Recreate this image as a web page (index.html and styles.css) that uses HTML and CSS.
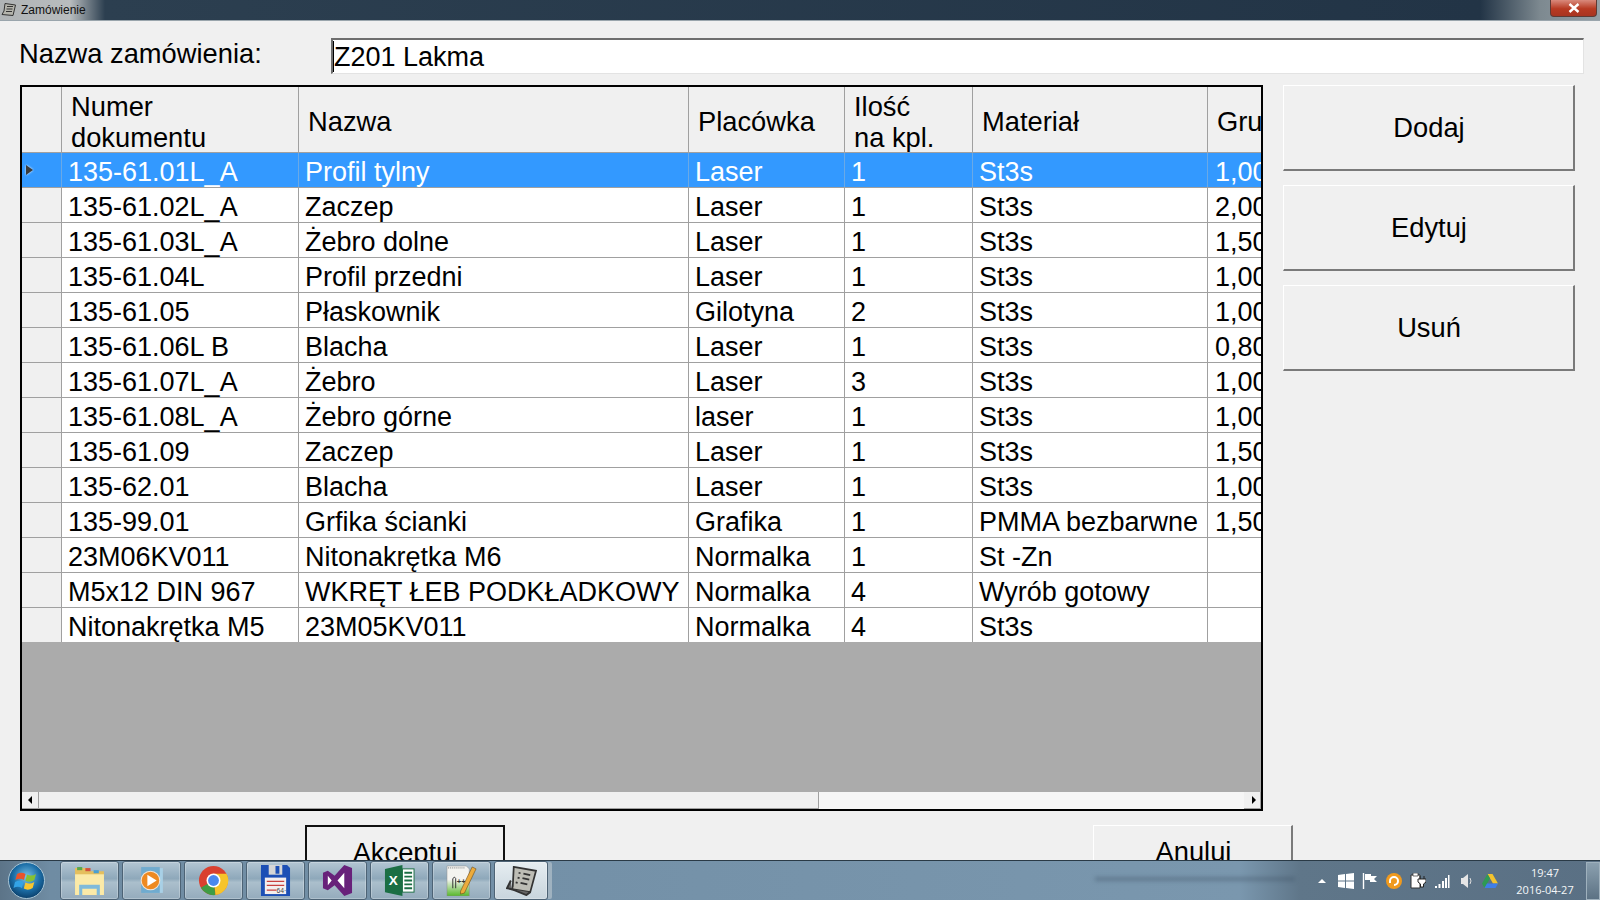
FILE: index.html
```html
<!DOCTYPE html>
<html lang="pl">
<head>
<meta charset="utf-8">
<title>Zamówienie</title>
<link rel="stylesheet" href="styles.css">
</head>
<body>
<div class="screen">
  <header class="titlebar">
    <svg class="title-icon" viewBox="0 0 16 16"><path d="M4 1.500 14.500 3 12 13.500 1 12.500 3 9z" fill="#b4b4ac" stroke="#333"/><path d="M6 4.500h6M5.500 7h6M5 9.500h6" stroke="#333"/></svg>
    <span class="title-text">Zamówienie</span>
    <span class="close"><svg viewBox="0 0 12 10" class="close-x"><path d="M1.500 1 10.500 9M10.500 1 1.500 9" stroke="#fff" stroke-width="2.400"/></svg></span>
  </header>
  <main class="window">
    <div class="name-row">
      <label class="name-label">Nazwa zamówienia:</label>
      <div class="name-input"><span class="caret"></span>Z201 Lakma</div>
    </div>
    <div class="middle">
      <div class="grid">
        <div class="grid-head">
          <div class="rh"></div>
          <div class="c c1 hc">Numer<br>dokumentu</div>
          <div class="c c2 hc">Nazwa</div>
          <div class="c c3 hc">Placówka</div>
          <div class="c c4 hc">Ilość<br>na kpl.</div>
          <div class="c c5 hc">Materiał</div>
          <div class="c c6 hc">Grubość</div>
        </div>
        <div class="row sel"><div class="rh"><span class="tri"></span></div><div class="c c1">135-61.01L_A</div><div class="c c2">Profil tylny</div><div class="c c3">Laser</div><div class="c c4">1</div><div class="c c5">St3s</div><div class="c c6">1,00</div></div>
        <div class="row"><div class="rh"></div><div class="c c1">135-61.02L_A</div><div class="c c2">Zaczep</div><div class="c c3">Laser</div><div class="c c4">1</div><div class="c c5">St3s</div><div class="c c6">2,00</div></div>
        <div class="row"><div class="rh"></div><div class="c c1">135-61.03L_A</div><div class="c c2">Żebro dolne</div><div class="c c3">Laser</div><div class="c c4">1</div><div class="c c5">St3s</div><div class="c c6">1,50</div></div>
        <div class="row"><div class="rh"></div><div class="c c1">135-61.04L</div><div class="c c2">Profil przedni</div><div class="c c3">Laser</div><div class="c c4">1</div><div class="c c5">St3s</div><div class="c c6">1,00</div></div>
        <div class="row"><div class="rh"></div><div class="c c1">135-61.05</div><div class="c c2">Płaskownik</div><div class="c c3">Gilotyna</div><div class="c c4">2</div><div class="c c5">St3s</div><div class="c c6">1,00</div></div>
        <div class="row"><div class="rh"></div><div class="c c1">135-61.06L B</div><div class="c c2">Blacha</div><div class="c c3">Laser</div><div class="c c4">1</div><div class="c c5">St3s</div><div class="c c6">0,80</div></div>
        <div class="row"><div class="rh"></div><div class="c c1">135-61.07L_A</div><div class="c c2">Żebro</div><div class="c c3">Laser</div><div class="c c4">3</div><div class="c c5">St3s</div><div class="c c6">1,00</div></div>
        <div class="row"><div class="rh"></div><div class="c c1">135-61.08L_A</div><div class="c c2">Żebro górne</div><div class="c c3">laser</div><div class="c c4">1</div><div class="c c5">St3s</div><div class="c c6">1,00</div></div>
        <div class="row"><div class="rh"></div><div class="c c1">135-61.09</div><div class="c c2">Zaczep</div><div class="c c3">Laser</div><div class="c c4">1</div><div class="c c5">St3s</div><div class="c c6">1,50</div></div>
        <div class="row"><div class="rh"></div><div class="c c1">135-62.01</div><div class="c c2">Blacha</div><div class="c c3">Laser</div><div class="c c4">1</div><div class="c c5">St3s</div><div class="c c6">1,00</div></div>
        <div class="row"><div class="rh"></div><div class="c c1">135-99.01</div><div class="c c2">Grfika ścianki</div><div class="c c3">Grafika</div><div class="c c4">1</div><div class="c c5">PMMA bezbarwne</div><div class="c c6">1,50</div></div>
        <div class="row"><div class="rh"></div><div class="c c1">23M06KV011</div><div class="c c2">Nitonakrętka M6</div><div class="c c3">Normalka</div><div class="c c4">1</div><div class="c c5">St -Zn</div><div class="c c6"></div></div>
        <div class="row"><div class="rh"></div><div class="c c1">M5x12 DIN 967</div><div class="c c2">WKRĘT ŁEB PODKŁADKOWY</div><div class="c c3">Normalka</div><div class="c c4">4</div><div class="c c5">Wyrób gotowy</div><div class="c c6"></div></div>
        <div class="row last"><div class="rh"></div><div class="c c1">Nitonakrętka M5</div><div class="c c2">23M05KV011</div><div class="c c3">Normalka</div><div class="c c4">4</div><div class="c c5">St3s</div><div class="c c6"></div></div>
        <div class="grid-empty"></div>
        <div class="hscroll">
          <span class="sb-btn"><span class="arr-l"></span></span>
          <span class="sb-thumb"></span>
          <span class="sb-track"></span>
          <span class="sb-btn"><span class="arr-r"></span></span>
        </div>
      </div>
      <div class="side">
        <button class="btn side-btn">Dodaj</button>
        <button class="btn side-btn">Edytuj</button>
        <button class="btn side-btn">Usuń</button>
      </div>
    </div>
    <div class="bottom">
      <button class="btn bottom-btn default">Akceptuj</button>
      <button class="btn bottom-btn cancel">Anuluj</button>
    </div>
  </main>
  <footer class="taskbar">
    <span class="ghost"></span>
    <div class="start">
      <svg viewBox="0 0 37 37" class="orb"><defs><radialGradient id="o" cx="50%" cy="40%" r="60%"><stop offset="0" stop-color="#7cc4e8"/><stop offset=".6" stop-color="#1c6fa8"/><stop offset="1" stop-color="#0b3f6b"/></radialGradient></defs><circle cx="18.500" cy="18.500" r="18" fill="url(#o)" stroke="#a9c6d6"/><path d="M9 12q4.500-2.500 8.500 0l-1.600 6q-4-2.400-8.500 0z" fill="#e9532b"/><path d="M19 12.500q4.500 2.400 9-.6l-1.700 6.200q-4.500 3-8.900.6z" fill="#86c232"/><path d="M7 20q4.500-2.500 8.500 0L14 26q-4-2.400-8.500 0z" fill="#33a3e6"/><path d="M17.400 20.500q4.500 2.400 8.900-.6L24.700 26q-4.500 3-8.900.6z" fill="#f8c62e"/></svg>
    </div>
    <div class="tb-apps">
      <div class="tb"><svg viewBox="0 0 30 30"><path d="M1 3h12l2 3h14v23H1z" fill="#e5bf5e"/><rect x="3" y="2" width="5" height="3" fill="#59a84a"/><rect x="11" y="3" width="5" height="3" fill="#d2503c"/><rect x="19" y="5" width="5" height="3" fill="#4a9fd0"/><rect x="1" y="9" width="28" height="20" fill="#fbeaa8"/><path d="M5 19h20v10h-3v-6H8v6H5z" fill="#7fbada"/></svg></div>
      <div class="tb"><svg viewBox="0 0 30 30"><rect x="9" y="3" width="17" height="24" fill="#a8d0e6"/><rect x="5" y="2" width="18" height="25" fill="#70abcf"/><circle cx="14" cy="15" r="9" fill="#ee8a22" stroke="#f4e4d4" stroke-width="1"/><path d="M11 9.500 20 15l-9 5.500z" fill="#fff"/></svg></div>
      <div class="tb"><svg viewBox="0 0 32 32"><circle cx="16" cy="16" r="15" fill="#d9402f"/><path d="M16 16 3 23.500A15 15 0 0 0 18 31z" fill="#3f9c44"/><path d="M16 9h13.500A15 15 0 0 1 18 31z" fill="#f6c42b"/><circle cx="16" cy="16" r="7.200" fill="#fff"/><circle cx="16" cy="16" r="5.600" fill="#4a88ee"/></svg></div>
      <div class="tb"><svg viewBox="0 0 32 32"><path d="M1 0h27l3 3v29H1z" fill="#1c4fb5"/><rect x="9" y="0" width="14" height="10" fill="#d6d6d6"/><rect x="16" y="1" width="4" height="8" fill="#1c4fb5"/><rect x="5" y="13" width="22" height="17" fill="#f3eeee"/><path d="M7 17h18M7 21h18M7 26h10" stroke="#c8403e" stroke-width="1.300"/><text x="17" y="29" class="mini">64·</text></svg></div>
      <div class="tb"><svg viewBox="0 0 32 32"><path d="M1 8 6 6l7 5L23 0l8 3v26l-8 3L13 21l-7 5-5-2z" fill="#68217a"/><path d="M6 11v10l4-5zM23 8l-7 8 7 8z" fill="#fff"/></svg></div>
      <div class="tb"><svg viewBox="0 0 32 32"><path d="M1 4 19 0v32L1 28z" fill="#1b6e44"/><rect x="19" y="4" width="12" height="24" fill="#fff" stroke="#1b6e44"/><path d="M21 8h8M21 12h8M21 16h8M21 20h8M21 24h8" stroke="#1b6e44" stroke-width="2"/><text x="5" y="21" class="xl">X</text></svg></div>
      <div class="tb"><svg viewBox="0 0 32 32"><defs><linearGradient id="n" x1="0" y1="0" x2="0" y2="1"><stop offset=".45" stop-color="#f4f4f0"/><stop offset="1" stop-color="#56b82b"/></linearGradient></defs><path d="M1 1h20l3 3v28H1z" fill="url(#n)" stroke="#888" stroke-width=".5"/><path d="M2 3h18" stroke="#777" stroke-dasharray="1 1"/><path d="M7 24V14q2-3 3 0v10" stroke="#333" stroke-width="1" fill="none"/><text x="11" y="20" class="npp">++</text><path d="M15 27 27 2l4 2L19 29l-4 1z" fill="#ecab3b" stroke="#6b4a15" stroke-width=".6"/></svg></div>
      <div class="tb tb-active"><svg viewBox="0 0 32 32"><path d="M8 2 31 6l-6 22-19-3 1-3z" fill="#bdbdb5" stroke="#333" stroke-width="1.800"/><path d="M6 25 1 24l4-8M6 25l15 6 4-3" stroke="#333" stroke-width="2" fill="#666"/><path d="M13 8l2 .5M18 9l7 1.500M12 13l2 .5M17 13.500l7 1.500M10 18l2 .5M15 18.500l7 1.500" stroke="#333" stroke-width="1.800"/></svg></div>
    </div>
    <div class="tray">
      <span class="tray-up"></span>
      <svg class="ti" viewBox="0 0 16 16"><path d="M0 2l7-1v6.500H0zM8 1l8-1v7.500H8zM0 8.500h7V15l-7-1zM8 8.500h8V16l-8-1z" fill="#fff"/></svg>
      <svg class="ti" viewBox="0 0 16 16"><path d="M1.500 0v16" stroke="#fff" stroke-width="1.400"/><path d="M3 1h6v2h6l-3 3 3 3H8V7H3z" fill="#fff"/></svg>
      <svg class="ti" viewBox="0 0 16 16"><circle cx="8" cy="8" r="8" fill="#f09a1e"/><path d="M4 10V8a4 4 0 1 1 4 4" fill="none" stroke="#fff" stroke-width="2"/></svg>
      <svg class="ti" viewBox="0 0 16 16"><path d="M1 2h9v13H1z" fill="#fff" stroke="#333"/><path d="M3 0h5v3H3z" fill="#fff" stroke="#333" stroke-width=".7"/><path d="M8 6h8v3l-2.500 2v3h-3v-3L8 9zM10 3v3M14 3v3" fill="#fff" stroke="#222"/></svg>
      <svg class="ti" viewBox="0 0 16 16"><path d="M1 13h2v2H1zM4.500 11h2v4h-2zM8 8h2v7H8zM11 5h2v10h-2zM14 2h1.500v13H14z" fill="#fff"/></svg>
      <svg class="ti" viewBox="0 0 16 16"><path d="M3 5h2l5-4v14l-5-4H3z" fill="#e6e6e6"/><path d="M12 5q2 3 0 6" stroke="#ddd" fill="none"/></svg>
      <svg class="ti" viewBox="0 0 16 16"><path d="M5.500 1h5L16 10.500h-5z" fill="#f3c32d"/><path d="M5.500 1 0 10.500 2.500 15 8 5.500z" fill="#2f9a53"/><path d="M2.500 15h11l2.500-4.500H5z" fill="#3f7ee8"/></svg>
      <div class="clock">19:47<br>2016-04-27</div>
      <span class="show-desktop"></span>
    </div>
  </footer>
</div>
</body>
</html>
```
FILE: styles.css
```css
* { box-sizing: border-box; }
html, body { margin: 0; padding: 0; height: 100%; overflow: hidden; }
body { font-family: "Liberation Sans", Arial, sans-serif; color: #000; }
.screen { position: relative; width: 1600px; height: 900px; overflow: hidden; background: #f0f0f0; display: flex; flex-direction: column; }

.titlebar { height: 21px; flex: none; display: flex; align-items: center; border-bottom: 1px solid #9aa5ac;
  background: linear-gradient(90deg, #b0b4b6 0, #b8bcbe 70px, #2c3f50 105px, #223446 1480px, #7d8990 1540px, #95a0a6 1600px); }
.title-icon { width: 16px; height: 16px; margin-left: 1px; flex: none; }
.title-text { font: 12px "Liberation Sans", sans-serif; margin-left: 4px; color: #111; }
.close { margin-left: auto; margin-right: 3px; margin-bottom: 3px; width: 47px; height: 17px; background: linear-gradient(#d98a7c, #b73a22 55%, #a83420); border: 1px solid #5e3a34; border-top: 0; border-radius: 0 0 4px 4px; display: flex; align-items: center; justify-content: center; }
.close-x { width: 12px; height: 10px; }

.window { flex: 1; display: flex; flex-direction: column; padding: 16px 0 0 20px; background: #f0f0f0; min-height: 0; }
.name-row { display: flex; height: 37px; flex: none; }
.name-label { width: 311px; margin-left: -1px; margin-right: 1px; font-size: 27.3px; line-height: 34px; flex: none; }
.name-input { width: 1253px; height: 36px; margin-top: 1px; background: #fff; border-top: 2px solid #6e6e6e; border-left: 2px solid #6e6e6e; border-right: 1px solid #e3e3e3; border-bottom: 1px solid #e3e3e3; font-size: 27px; line-height: 34px; padding-left: 1px; display: flex; align-items: center; }
.caret { width: 1px; height: 31px; background: #000; margin-left: -1px; }

.middle { display: flex; margin-top: 11px; flex: none; }
.grid { width: 1243px; height: 726px; border: 2px solid #000; background: #ababab; display: flex; flex-direction: column; overflow: hidden; flex: none; }
.grid-head { height: 66px; display: flex; background: #f0f0f0; flex: none; border-bottom: 1px solid #a0a0a0; }
.row { height: 35px; display: flex; background: #fff; border-bottom: 1px solid #a0a0a0; flex: none; font-size: 27px; }
.row.last { height: 34px; border-bottom: 0; }
.rh { width: 40px; flex: none; background: #f0f0f0; border-right: 1px solid #a0a0a0; display: flex; align-items: center; padding-left: 4px; }
.c { flex: none; border-right: 1px solid #a0a0a0; padding-left: 6px; white-space: nowrap; overflow: hidden; line-height: 38px; }
.hc { font-size: 27.3px; line-height: 31px; padding-left: 9px; padding-top: 4px; display: flex; align-items: center; }
.c1 { width: 237px; }
.c2 { width: 390px; }
.c3 { width: 156px; }
.c4 { width: 128px; }
.c5 { width: 235px; }
.c6 { width: 54px; border-right: 0; padding-left: 7px; }
.hc.c6 { padding-left: 9px; }
.hc.c1, .hc.c4 { display: block; padding-top: 4px; }
.sel { background: #3399ff; color: #fff; }
.sel .rh { background: #3399ff; border-right-color: #6aa9e6; }
.sel .c { border-right-color: #6aa9e6; }
.tri { width: 0; height: 0; border-left: 7px solid #3a3a3a; border-top: 5px solid transparent; border-bottom: 5px solid transparent; filter: drop-shadow(0 0 1px #fff); }
.grid-empty { flex: 1; background: #ababab; }
.hscroll { height: 17px; flex: none; display: flex; background: #f0f0f0; }
.sb-btn { width: 17px; flex: none; background: #f0f0f0; border-right: 1px solid #a0a0a0; border-bottom: 1px solid #a0a0a0; display: flex; align-items: center; justify-content: center; }
.sb-thumb { width: 780px; background: #f0f0f0; border-right: 1px solid #a0a0a0; border-bottom: 1px solid #a0a0a0; flex: none; }
.sb-track { flex: 1; background: #f6f6f6; }
.arr-l { border-right: 4px solid #000; border-top: 4px solid transparent; border-bottom: 4px solid transparent; }
.arr-r { margin-left: 3px; border-left: 4px solid #000; border-top: 4px solid transparent; border-bottom: 4px solid transparent; }

.side { display: flex; flex-direction: column; gap: 14px; margin-left: 20px; flex: none; }
.btn { background: #f0f0f0; border-top: 1px solid #fff; border-left: 1px solid #fff; border-right: 2px solid #7a7a7a; border-bottom: 2px solid #7a7a7a; font: 27.3px "Liberation Sans", sans-serif; color: #000; padding: 1px 0 0 1px; }
.side-btn { width: 292px; height: 86px; }

.bottom { display: flex; margin-top: 14px; margin-left: 285px; gap: 588px; flex: none; }
.bottom-btn { width: 200px; height: 85px; padding: 0 0 30px; }
.bottom-btn.default { border: 2px solid #111; }
.bottom-btn.cancel { padding-left: 2px; }

.taskbar { position: absolute; left: 0; bottom: 0; width: 1600px; height: 40px; display: flex; align-items: stretch; border-top: 1px solid #2a3a46;
  background: linear-gradient(90deg, #5c7488 0, #6f8ca3 50px, #7a97ae 1240px, #5f7689 1300px, #5a7084 1600px); }
.ghost { position: absolute; left: 1095px; top: 16px; width: 200px; height: 4px; background: rgba(60, 80, 100, .4); filter: blur(2px); }
.start { width: 60px; flex: none; display: flex; align-items: center; padding-left: 8px; }
.orb { width: 37px; height: 37px; }
.tb-apps { display: flex; gap: 3px; position: relative; }
.tb { width: 59px; height: 39px; border: 1px solid #4d6375; border-radius: 3px; background: linear-gradient(#b3c6d3 0, #8ea8ba 45%, #abbfcc 55%, #94abbc 100%); display: flex; align-items: center; justify-content: center; box-shadow: inset 0 0 0 1px rgba(255,255,255,.25); }
.tb svg { width: 31px; height: 31px; }
.tb-active { width: 54px; background: linear-gradient(#e6edf1, #c8d5dd); box-shadow: inset 0 0 0 1px rgba(255,255,255,.25), 5px 0 0 -1px #9fb2c0; }
.xl { font: bold 14px "Liberation Sans", sans-serif; fill: #fff; }
.mini { font: 7px "Liberation Sans", sans-serif; fill: #444; }
.npp { font: bold 8px "Liberation Sans", sans-serif; fill: #333; }
.tray { margin-left: auto; display: flex; align-items: center; color: #fff; position: relative; }
.tray-up { width: 0; height: 0; border-left: 4px solid transparent; border-right: 4px solid transparent; border-bottom: 4px solid #fff; margin-right: 12px; }
.ti { width: 16px; height: 16px; margin-right: 8px; flex: none; }
.clock { width: 78px; margin-right: 2px; text-align: center; font: 11px/17px "Open Sans", sans-serif; color: #f4f7f9; }
.show-desktop { width: 14px; height: 38px; background: linear-gradient(#8ba0af, #5c7284); border: 1px solid #9fb1bd; flex: none; }
```
